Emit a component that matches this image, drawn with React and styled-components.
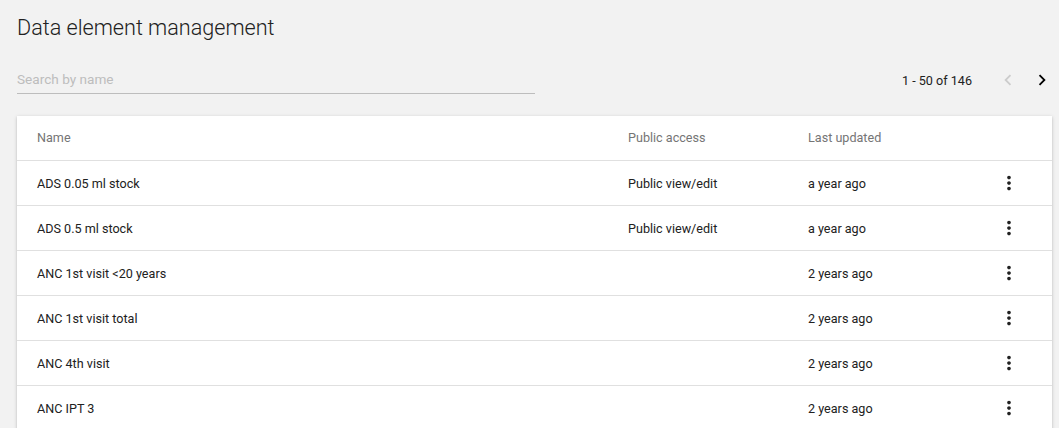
import React from 'react';
import styled, { createGlobalStyle } from 'styled-components';
import { MdChevronLeft, MdChevronRight, MdMoreVert } from 'react-icons/md';

const rows = [
  { name: 'ADS 0.05 ml stock', access: 'Public view/edit', updated: 'a year ago' },
  { name: 'ADS 0.5 ml stock', access: 'Public view/edit', updated: 'a year ago' },
  { name: 'ANC 1st visit <20 years', access: '', updated: '2 years ago' },
  { name: 'ANC 1st visit total', access: '', updated: '2 years ago' },
  { name: 'ANC 4th visit', access: '', updated: '2 years ago' },
  { name: 'ANC IPT 3', access: '', updated: '2 years ago' },
];

const App = () => {
  return (
    <>
      <GlobalStyle />
      <Page>
        <Title>Data element management</Title>
        <Toolbar>
          <SearchInput type="text" placeholder="Search by name" />
          <Pager>
            <PagerText>1 - 50 of 146</PagerText>
            <PagerButton disabled>
              <MdChevronLeft size={22} />
            </PagerButton>
            <PagerButton>
              <MdChevronRight size={22} />
            </PagerButton>
          </Pager>
        </Toolbar>
        <Card>
          <HeaderRow>
            <Cell>Name</Cell>
            <Cell>Public access</Cell>
            <Cell>Last updated</Cell>
            <Cell />
          </HeaderRow>
          {rows.map(row => (
            <Row key={row.name}>
              <Cell>{row.name}</Cell>
              <Cell>{row.access}</Cell>
              <Cell>{row.updated}</Cell>
              <MenuCell>
                <MdMoreVert size={22} />
              </MenuCell>
            </Row>
          ))}
        </Card>
      </Page>
    </>
  );
};

const GlobalStyle = createGlobalStyle`
  body {
    margin: 0;
    background-color: #f2f2f2;
    font-family: Roboto, "Liberation Sans", sans-serif;
    overflow: hidden;
  }
`;

const Page = styled.div`
  padding: 13px 7px 0 17px;
`;

const Title = styled.h1`
  margin: 0;
  font-size: 21.6px;
  font-weight: 300;
  line-height: 30px;
  color: #212121;
`;

const Toolbar = styled.div`
  display: flex;
  align-items: center;
  justify-content: space-between;
  margin: 18px -7px 0 0;
  height: 36px;
`;

const SearchInput = styled.input`
  width: 518px;
  height: 28px;
  padding: 0;
  border: none;
  border-bottom: 1px solid #bdbdbd;
  background: transparent;
  outline: none;
  font-family: inherit;
  font-size: 13.6px;
  color: #333;

  &::placeholder {
    color: #bdbdbd;
  }
`;

const Pager = styled.div`
  display: flex;
  align-items: center;
  padding-top: 2px;
`;

const PagerText = styled.span`
  font-size: 12.6px;
  color: #212121;
  margin-right: 19px;
`;

const PagerButton = styled.button`
  display: flex;
  align-items: center;
  justify-content: center;
  width: 34px;
  height: 34px;
  padding: 0;
  border: none;
  background: none;
  color: ${p => (p.disabled ? '#cccccc' : '#000')};
`;

const Card = styled.div`
  margin-top: 19px;
  background: #fff;
  box-shadow: 0 1px 4px rgba(0, 0, 0, 0.16), 0 1px 2px rgba(0, 0, 0, 0.1);
`;

const Row = styled.div`
  display: grid;
  grid-template-columns: 1fr 180px 178px 86px;
  align-items: center;
  box-sizing: border-box;
  height: 45px;
  border-top: 1px solid #e0e0e0;
  font-size: 12.6px;
  color: #212121;
`;

const HeaderRow = styled(Row)`
  height: 44px;
  padding-bottom: 2px;
  border-top: none;
  color: #757575;
`;

const Cell = styled.div`
  padding-left: 20px;
  white-space: nowrap;
`;

const MenuCell = styled.div`
  display: flex;
  justify-content: center;
  color: #212121;
`;

export default App;
